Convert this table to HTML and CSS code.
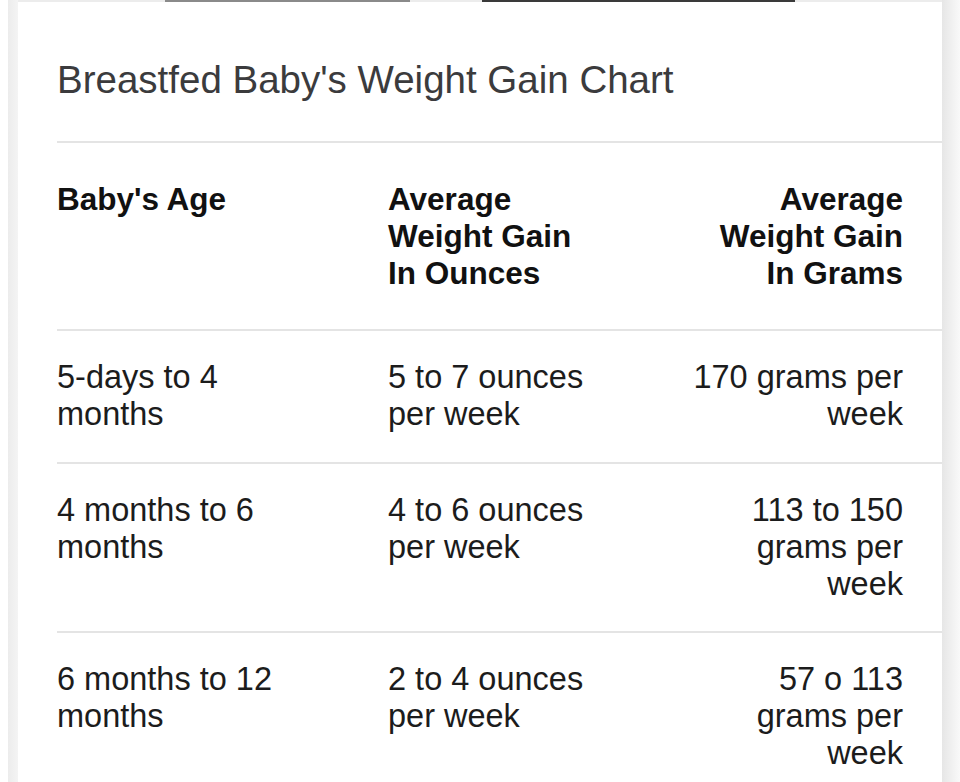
FILE: index.html
```html
<!DOCTYPE html>
<html lang="en">
<head>
<meta charset="utf-8">
<title>Breastfed Baby's Weight Gain Chart</title>
<link rel="stylesheet" href="styles.css">
</head>
<body>
<div class="page">
  <div class="gutter"></div>
  <div class="shade shade-left"></div>
  <main class="card">
    <div class="topstrip">
      <span class="bar bar-one"></span>
      <span class="bar bar-two"></span>
    </div>
    <h1 class="title">Breastfed Baby's Weight Gain Chart</h1>
    <div class="table">
      <div class="row head">
        <div class="cell c1">Baby's Age</div>
        <div class="cell c2">Average Weight Gain In Ounces</div>
        <div class="cell c3">Average Weight Gain In Grams</div>
      </div>
      <div class="row">
        <div class="cell c1">5-days to 4 months</div>
        <div class="cell c2">5 to 7 ounces per week</div>
        <div class="cell c3">170 grams per week</div>
      </div>
      <div class="row">
        <div class="cell c1">4 months to 6 months</div>
        <div class="cell c2">4 to 6 ounces per week</div>
        <div class="cell c3">113 to 150 grams per week</div>
      </div>
      <div class="row">
        <div class="cell c1">6 months to 12 months</div>
        <div class="cell c2">2 to 4 ounces per week</div>
        <div class="cell c3">57 o 113 grams per week</div>
      </div>
    </div>
  </main>
  <div class="shade shade-right"></div>
</div>
</body>
</html>
```
FILE: styles.css
```css
html, body {
  margin: 0;
  padding: 0;
  background: #ffffff;
}
body {
  font-family: "Liberation Sans", Arial, Helvetica, sans-serif;
  color: #1a1a1a;
  width: 960px;
  height: 782px;
  overflow: hidden;
}
.page {
  display: flex;
  height: 782px;
}
.gutter {
  width: 8px;
  flex: none;
  background: #ffffff;
}
.shade {
  flex: none;
}
.shade-left {
  width: 10px;
  background: linear-gradient(to right, #ececec, #f4f4f4);
}
.shade-right {
  width: 18px;
  background: linear-gradient(to right, #e6e6e6, #f9f9f9);
}
.card {
  width: 924px;
  flex: none;
  background: #ffffff;
  display: flex;
  flex-direction: column;
}
.topstrip {
  display: flex;
  height: 2px;
  background: #ececec;
}
.bar {
  display: block;
  height: 2px;
}
.bar-one {
  margin-left: 147px;
  width: 245px;
  background: #8a8a8a;
}
.bar-two {
  margin-left: 72px;
  width: 313px;
  background: #3a3a3a;
}
.title {
  margin: 55px 0 0 39px;
  padding-bottom: 38px;
  border-bottom: 2px solid #e4e4e4;
  font-size: 38.5px;
  line-height: 46px;
  font-weight: normal;
  color: #3b3b3d;
}
.table {
  margin-left: 39px;
}
.row {
  display: grid;
  grid-template-columns: 331px 300px 1fr;
  padding: 28px 0 29px;
  border-bottom: 2px solid #e4e4e4;
  font-size: 32.5px;
  line-height: 37px;
  color: #1c1c1c;
}
.row.head {
  padding: 38px 0 37px;
  font-size: 31.5px;
  font-weight: bold;
  color: #111111;
}
.row:nth-child(3) {
  padding-bottom: 28px;
}
.c1 {
  padding-right: 80px;
}
.c2 {
  padding-right: 95px;
}
.c3 {
  text-align: right;
  padding-right: 39px;
  padding-left: 2px;
}
```
